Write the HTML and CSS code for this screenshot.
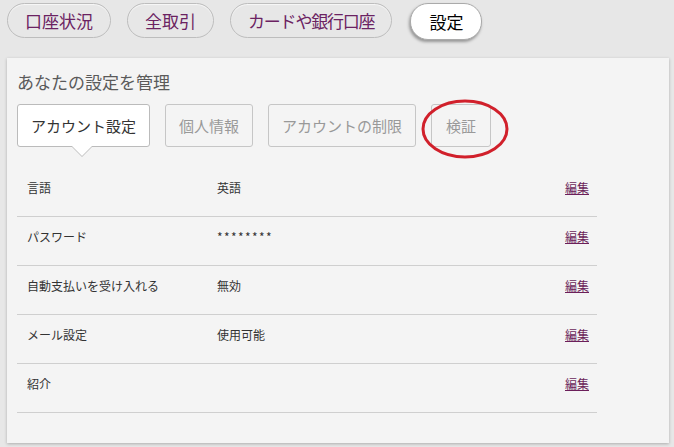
FILE: index.html
```html
<!doctype html>
<html lang="ja">
<head>
<meta charset="utf-8">
<title>設定</title>
<link rel="stylesheet" href="styles.css">
</head>
<body>
    <div class="nav">
        <a class="pill">口座状況</a>
        <a class="pill">全取引</a>
        <a class="pill pill-long">カードや銀行口座</a>
        <a class="pill pill-on">設定</a>
    </div>

    <div class="panel">
        <h1 class="title">あなたの設定を管理</h1>
        <div class="tabs">
            <div class="tab tab-on">アカウント設定</div>
            <div class="tab">個人情報</div>
            <div class="tab">アカウントの制限</div>
            <div class="tab tab-mark">検証
                <svg class="ring" width="92" height="64" viewBox="0 0 92 64">
                    <ellipse cx="46" cy="32" rx="42" ry="28" fill="none" stroke="#d1202b" stroke-width="3"/>
                </svg>
            </div>
        </div>

        <div class="rows">
            <div class="row">
                <span class="lbl">言語</span>
                <span class="val">英語</span>
                <a class="edit">編集</a>
            </div>
            <div class="row">
                <span class="lbl">パスワード</span>
                <span class="val mask">********</span>
                <a class="edit">編集</a>
            </div>
            <div class="row">
                <span class="lbl">自動支払いを受け入れる</span>
                <span class="val">無効</span>
                <a class="edit">編集</a>
            </div>
            <div class="row">
                <span class="lbl">メール設定</span>
                <span class="val">使用可能</span>
                <a class="edit">編集</a>
            </div>
            <div class="row">
                <span class="lbl">紹介</span>
                <span class="val"></span>
                <a class="edit">編集</a>
            </div>
        </div>
    </div>
</body>
</html>
```

FILE: styles.css
```css
html {
    background: #e7e7e7;
}
body {
    margin: 0;
    padding: 3px 5px 4px 7px;
    font-family: "Noto Sans CJK JP", "DejaVu Sans", sans-serif;
    color: #333;
}

.nav {
    display: flex;
    align-items: flex-start;
    gap: 16px;
}
.pill {
    height: 35px;
    line-height: 33px;
    box-sizing: border-box;
    padding: 0 17px;
    font-size: 17px;
    color: #6b2262;
    border: 1px solid #bdbdbd;
    border-radius: 18px;
    box-shadow: inset 0 1px 1px rgba(255,255,255,.7);
    cursor: pointer;
}
.pill-long {
    letter-spacing: -1.2px;
}
.pill-on {
    height: 37px;
    line-height: 35px;
    margin-left: 2px;
    padding: 0 18px;
    color: #000;
    background: #fff;
    border-color: #aaa;
    box-shadow: -1px 2px 3px rgba(0,0,0,.35);
}

.panel {
    margin-top: 18px;
    height: 385px;
    box-sizing: border-box;
    padding: 12px 10px 0 10px;
    background: #f4f4f4;
    box-shadow: 0 1px 3px rgba(0,0,0,.25);
}
.title {
    margin: 0;
    font-size: 17px;
    font-weight: normal;
    line-height: 24px;
    color: #5a5a5a;
}

.tabs {
    display: flex;
    gap: 15px;
    margin-top: 10px;
}
.tab {
    position: relative;
    height: 43px;
    line-height: 41px;
    box-sizing: border-box;
    padding: 0 13px;
    font-size: 15px;
    color: #999;
    border: 1px solid #c6c6c6;
    border-radius: 3px;
}
.tab-on {
    color: #333;
    background: #fff;
    border-color: #bbb;
}
.tab-on::after,
.tab-on::before {
    content: "";
    position: absolute;
    left: 54px;
    border-style: solid;
    border-width: 10px 10px 0 10px;
}
.tab-on::before {
    bottom: -11px;
    border-color: #bbb transparent transparent transparent;
}
.tab-on::after {
    bottom: -10px;
    border-color: #fff transparent transparent transparent;
}
.tab-mark {
    padding: 0 14px;
}
.ring {
    position: absolute;
    left: -13px;
    top: -8px;
}

.rows {
    width: 580px;
    margin-top: 21px;
}
.row {
    display: flex;
    padding: 12px 8px 20px 10px;
    font-size: 12px;
    line-height: 16px;
    border-bottom: 1px solid #cfcfcf;
}
.lbl {
    width: 190px;
}
.val {
    flex: 1;
}
.mask {
    letter-spacing: 1.4px;
}
.edit {
    color: #6b1f5a;
    text-decoration: underline;
    cursor: pointer;
}
```
